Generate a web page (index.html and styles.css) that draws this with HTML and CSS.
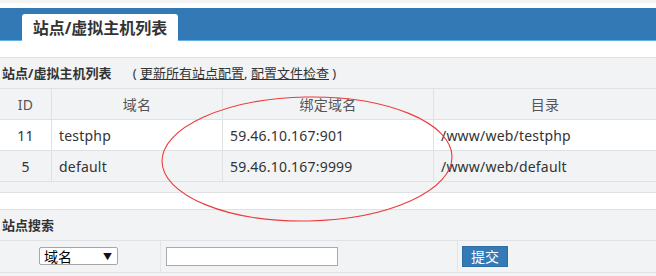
FILE: index.html
```html
<!DOCTYPE html>
<html lang="zh-CN">
<head>
    <meta charset="UTF-8">
    <meta name="viewport" content="width=device-width, initial-scale=1.0">
    <title>站点/虚拟主机列表</title>
    <link rel="stylesheet" href="styles.css">
</head>
<body>
    <div class="top-strip"></div>

    <!-- Tab bar -->
    <div class="banner">
        <div class="tab">站点/虚拟主机列表</div>
    </div>

    <!-- Site list -->
    <div class="panel">
        <div class="panel-title">
            <b>站点/虚拟主机列表</b>
            <span class="actions">( <a href="#">更新所有站点配置</a>, <a href="#">配置文件检查</a> )</span>
        </div>
        <table class="site-table">
            <thead>
                <tr>
                    <th class="col-id">ID</th>
                    <th class="col-name">域名</th>
                    <th class="col-bind">绑定域名</th>
                    <th>目录</th>
                </tr>
            </thead>
            <tbody>
                <tr>
                    <td class="center">11</td>
                    <td>testphp</td>
                    <td>59.46.10.167:901</td>
                    <td>/www/web/testphp</td>
                </tr>
                <tr class="alt">
                    <td class="center">5</td>
                    <td>default</td>
                    <td>59.46.10.167:9999</td>
                    <td>/www/web/default</td>
                </tr>
            </tbody>
        </table>
    </div>

    <!-- Search -->
    <div class="panel search-panel">
        <div class="panel-title"><b>站点搜索</b></div>
        <form class="search-row">
            <div class="cell cell-type">
                <div class="select-box">
                    <select name="type">
                        <option>域名</option>
                        <option>目录</option>
                    </select>
                </div>
            </div>
            <div class="cell cell-key">
                <input type="text" name="key">
            </div>
            <div class="cell cell-btn">
                <button type="submit">提交</button>
            </div>
        </form>
    </div>

    <!-- hand-drawn annotation -->
    <svg class="mark" width="656" height="276" viewBox="0 0 656 276">
        <ellipse cx="307" cy="159" rx="145" ry="62" fill="none" stroke="#ee3b3b" stroke-width="1.1" transform="rotate(-1 307 159)"/>
    </svg>
</body>
</html>
```

FILE: styles.css
```css
body {
    margin: 0;
    background: #fff;
    font-family: "Noto Sans", "Noto Sans CJK SC", sans-serif;
    font-size: 14px;
    color: #333;
    position: relative;
    width: 656px;
    height: 276px;
    overflow: hidden;
}
.top-strip {
    height: 3px;
    background: #f3f3f3;
    margin-bottom: 5px;
}
.banner {
    height: 32px;
    background: #3279b5;
    border-bottom: 1px solid #62b3e6;
    display: flex;
    align-items: flex-end;
    padding-left: 22px;
}
.tab {
    width: 156px;
    height: 27px;
    margin-bottom: -1px;
    background: #fff;
    border-radius: 3px 3px 0 0;
    text-align: center;
    line-height: 28px;
    font-size: 16px;
    font-weight: bold;
    color: #333;
}
.panel {
    margin-top: 16px;
    background: #f2f3f5;
    border-top: 1px solid #dfe1e5;
    border-bottom: 1px solid #dfe1e5;
    padding-bottom: 10px;
}
.panel-title {
    height: 30px;
    line-height: 30px;
    padding-left: 2px;
    font-size: 13px;
}
.actions {
    margin-left: 18px;
}
.actions a {
    color: #333;
    text-decoration: underline;
}
.site-table {
    width: 100%;
    border-collapse: collapse;
}
.site-table th,
.site-table td {
    height: 30px;
    padding: 0 7px;
    border-top: 1px solid #dfe1e5;
    border-bottom: 1px solid #dfe1e5;
    border-left: 1px solid #dfe1e5;
    text-align: left;
    font-weight: normal;
    letter-spacing: 0.2px;
}
.site-table th {
    text-align: center;
    color: #555;
}
.site-table th:first-child,
.site-table td:first-child {
    border-left: none;
}
.col-id { width: 37px; }
.col-name { width: 156px; }
.col-bind { width: 196px; }
.site-table td.center {
    text-align: center;
}
.site-table tbody tr {
    background: #fff;
}
.site-table tbody tr.alt {
    background: #f2f3f5;
}
.search-panel {
    padding-bottom: 4px;
}
.search-row {
    display: flex;
    margin: 0;
    height: 31px;
    border-top: 1px solid #dfe1e5;
    border-bottom: 1px solid #dfe1e5;
}
.cell {
    display: flex;
    align-items: center;
}
.cell-type {
    width: 160px;
    justify-content: center;
    padding-right: 3px;
    box-sizing: border-box;
}
.cell-key {
    width: 297px;
    border-left: 1px solid #e3e5e8;
    padding-left: 5px;
    box-sizing: border-box;
}
.cell-btn {
    flex: 1;
    border-left: 1px solid #e3e5e8;
    padding-left: 4px;
}
.select-box {
    position: relative;
}
.select-box::after {
    content: "▼";
    position: absolute;
    right: 6px;
    top: 3px;
    font-size: 9px;
    color: #111;
    pointer-events: none;
}
.select-box select {
    appearance: none;
    -webkit-appearance: none;
    width: 79px;
    height: 18px;
    padding: 0 0 0 4px;
    border: 1px solid #a6a6a6;
    border-radius: 2px;
    background: #fff;
    font-family: "Noto Sans CJK SC", sans-serif;
    font-size: 14px;
    line-height: 16px;
    color: #000;
}
.cell-key input {
    width: 172px;
    height: 19px;
    box-sizing: border-box;
    border: 1px solid #a9a9a9;
    background: #fff;
    padding: 0 3px;
}
.cell-btn button {
    width: 46px;
    height: 21px;
    padding: 0;
    background: #337ab7;
    border: 1px solid #2e6da4;
    color: #fff;
    font-family: "Noto Sans CJK SC", sans-serif;
    font-size: 14px;
    line-height: 19px;
}
.mark {
    position: absolute;
    left: 0;
    top: 0;
    pointer-events: none;
}
```
